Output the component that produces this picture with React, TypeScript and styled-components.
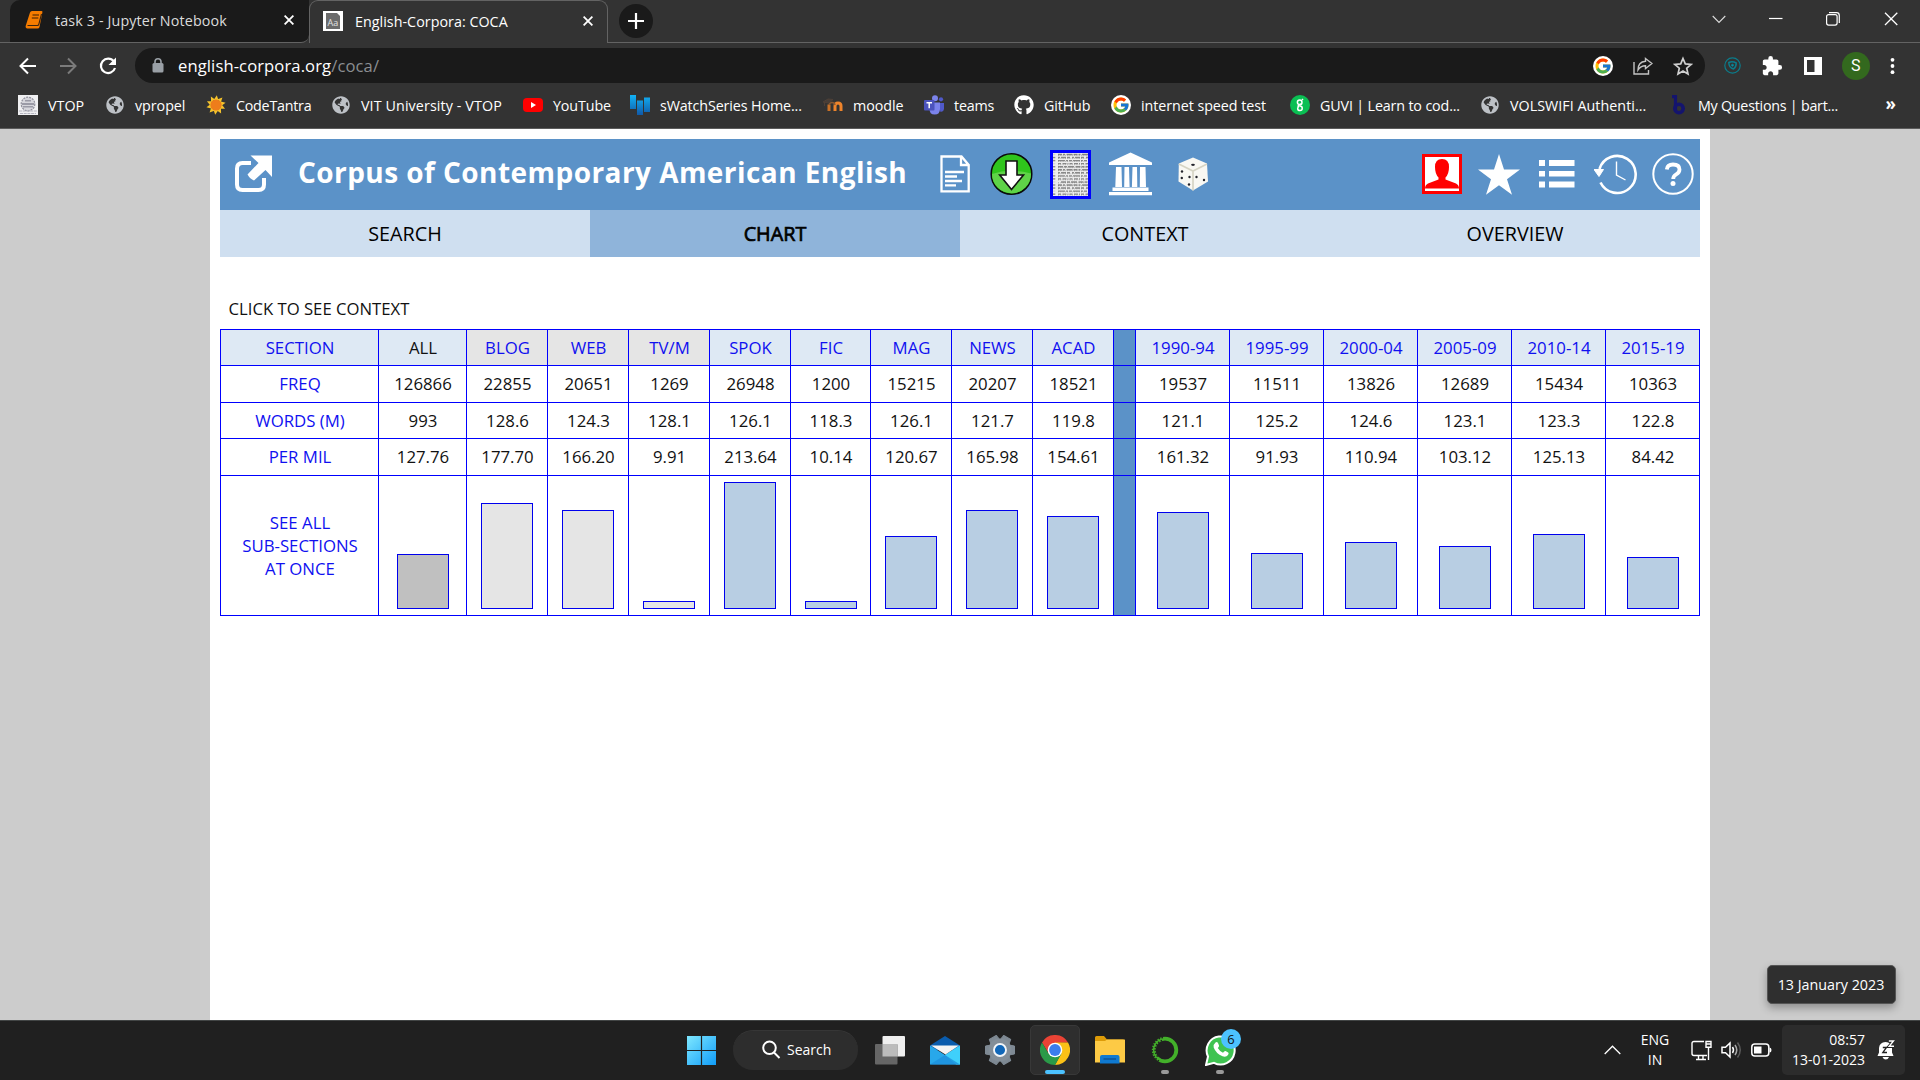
import React from "react";
import styled, { createGlobalStyle, css } from "styled-components";
import { FaGithub, FaGlobeAmericas } from "react-icons/fa";
import { FcGoogle } from "react-icons/fc";
import { MdExtension } from "react-icons/md";

const Global = createGlobalStyle`
  *, *::before, *::after { box-sizing: border-box; }
  body { margin: 0; background: #ccc; overflow: hidden; font-family: "Open Sans", "Noto Sans", sans-serif; }
  svg { display: block; flex: none; }
`;

const Desktop = styled.div`
  width: 1920px;
  height: 1080px;
  display: flex;
  flex-direction: column;
`;

/* ---------- Browser chrome ---------- */

const Browser = styled.header`
  height: 129px;
  flex: none;
  background: #333;
  color: #fff;
  border-bottom: 1px solid #5c5c5c;
`;

const TabStrip = styled.div`
  height: 43px;
  display: flex;
  align-items: stretch;
`;

const StripLine = styled.div<{ $w?: number }>`
  ${(p) => (p.$w ? `width: ${p.$w}px;` : "flex: 1;")}
  border-bottom: 1px solid #636363;
  display: flex;
  align-items: flex-start;
`;

const Tab = styled.div<{ $active?: boolean; $w: number }>`
  width: ${(p) => p.$w}px;
  display: flex;
  align-items: center;
  padding: 0 ${(p) => (p.$active ? 14 : 15)}px 2px ${(p) => (p.$active ? 13 : 15)}px;
  font-size: 14.3px;
  ${(p) =>
    p.$active
      ? css`
          border: 1px solid #636363;
          border-bottom: none;
          border-radius: 9px 9px 0 0;
          color: #fff;
        `
      : css`
          background: #1a1a1a;
          border-bottom: 1px solid #636363;
          border-radius: 10px 0 8px 0;
          color: #dcdcdc;
        `}
`;

const TabTitle = styled.span<{ $ls?: number }>`
  flex: 1;
  margin-left: 12px;
  letter-spacing: ${(p) => p.$ls ?? 0}px;
  white-space: nowrap;
`;

const NewTab = styled.div`
  width: 34px;
  height: 34px;
  margin: 4px 0 0 11px;
  border-radius: 50%;
  background: #1a1a1a;
  display: grid;
  place-items: center;
`;

const WindowButtons = styled.div`
  margin: 0 17px 0 auto;
  height: 38px;
  display: flex;
  align-items: center;
  gap: 37px;
`;

const Toolbar = styled.div`
  height: 46px;
  display: flex;
  align-items: center;
  padding: 0 25px 1px 18px;
`;

const NavButtons = styled.div`
  width: 117px;
  display: flex;
  gap: 20px;
  align-items: center;
`;

const Omnibox = styled.div`
  width: 1570px;
  height: 35px;
  border-radius: 18px;
  background: #1a1a1a;
  display: flex;
  align-items: center;
  padding: 0 12px 0 17px;
`;

const Url = styled.span`
  margin-left: 14px;
  flex: 1;
  font-size: 16.6px;
  letter-spacing: 0.1px;
  i {
    font-style: normal;
    color: #8b8e92;
  }
`;

const OmniIcons = styled.div`
  display: flex;
  align-items: center;
  gap: 20px;
`;

const Extensions = styled.div`
  display: flex;
  align-items: center;
  margin-left: 19px;
  flex: 1;
  justify-content: space-between;
`;

const Avatar = styled.div`
  width: 28px;
  height: 28px;
  border-radius: 50%;
  background: #33691e;
  font: 16px Roboto, sans-serif;
  display: grid;
  place-items: center;
`;

const Bookmarks = styled.nav`
  height: 34px;
  display: flex;
  align-items: center;
  padding: 0 0 2px 18px;
`;

const Bookmark = styled.div<{ $w: number; $ls: number }>`
  width: ${(p) => p.$w}px;
  display: flex;
  align-items: center;
  gap: 10px;
  white-space: nowrap;
  font-size: 14.3px;
  letter-spacing: ${(p) => p.$ls}px;
`;

const IconBox = styled.span`
  width: 20px;
  height: 20px;
  flex: none;
  display: grid;
  place-items: center;
`;

const GoogleBadge = styled.span`
  width: 20px;
  height: 20px;
  flex: none;
  border-radius: 50%;
  background: #fff;
  display: grid;
  place-items: center;
`;

const More = styled.span`
  margin-left: auto;
  padding: 0 24px 3px 0;
  font-size: 17px;
  font-weight: 700;
`;

/* ---------- Page ---------- */

const Viewport = styled.main`
  flex: 1;
  background: #ccc;
  display: flex;
  justify-content: center;
`;

const Page = styled.div`
  width: 1500px;
  background: #fff;
  padding: 10px 10px 0;
`;

const Banner = styled.div`
  height: 71px;
  background: #5b92c8;
  display: flex;
  align-items: center;
  padding: 0 6px 1px 14px;
`;

const Title = styled.h1`
  margin: 0 32px 4px 25px;
  width: 610px;
  font-size: 28px;
  font-weight: 700;
  letter-spacing: 0.44px;
  line-height: 40px;
  white-space: nowrap;
  color: #fff;
`;

const CorpusTools = styled.div`
  display: grid;
  grid-template-columns: 50px 60px 59px 69px 30px;
  align-items: center;
`;

const AccountTools = styled.div`
  margin-left: auto;
  display: grid;
  grid-template-columns: 56px 61px 55px 58px 42px;
  align-items: center;
`;

const Clipping = styled.div`
  width: 41px;
  height: 49px;
  border: 3px solid #0000ff;
  background: #ededed;
`;

const Profile = styled.div`
  width: 40px;
  height: 40px;
  border: 3px solid #f00;
  background: #fff;
`;

const Steps = styled.div`
  display: grid;
  grid-template-columns: repeat(4, 1fr);
  height: 47px;
`;

const Step = styled.div<{ $on?: boolean }>`
  display: grid;
  place-items: center;
  font-size: 19.8px;
  color: #000;
  background: ${(p) => (p.$on ? "#8fb4da" : "#cfdff0")};
  ${(p) => p.$on && "-webkit-text-stroke: 0.7px #000;"}
`;

const Hint = styled.div`
  margin: 40px 0 8px 8.5px;
  height: 24px;
  line-height: 24px;
  font-size: 16.7px;
  color: #111;
`;

const Chart = styled.div`
  display: grid;
  grid-template-columns: 158px 88px repeat(4, 81px) 80px repeat(3, 81px) 22px repeat(6, 94px);
  grid-template-rows: 36px 37px 36px 37px 140px;
  border-top: 1px solid #0000ff;
  border-left: 1px solid #0000ff;
  width: 1480px;
  font-size: 16.8px;
`;

const Cell = styled.div<{ $bg?: string; $blue?: boolean; $up?: boolean }>`
  border-right: 1px solid #0000ff;
  border-bottom: 1px solid #0000ff;
  background: ${(p) => p.$bg ?? "#fff"};
  color: ${(p) => (p.$blue ? "#1010f0" : "#111")};
  display: flex;
  align-items: center;
  justify-content: center;
  text-align: center;
  line-height: 23px;
  padding: 0 0 ${(p) => (p.$up ? 1 : 0)}px 1px;
  white-space: pre-line;
`;

const BarCell = styled(Cell)`
  align-items: flex-end;
  padding: 0 0 6px;
`;

const Bar = styled.div<{ $fill: string }>`
  width: 52px;
  border: 1px solid #0000ee;
  background: ${(p) => p.$fill};
`;

/* ---------- Taskbar ---------- */

const Taskbar = styled.footer`
  height: 60px;
  flex: none;
  background: #202020;
  border-top: 1px solid #424545;
  color: #fff;
  display: flex;
  align-items: center;
  padding: 0 15px 1px 687px;
`;

const SearchPill = styled.div`
  width: 125px;
  height: 40px;
  margin: 0 7px 0 17px;
  border-radius: 20px;
  background: #2d2d2d;
  border-top: 1px solid #363636;
  display: flex;
  align-items: center;
  padding: 0 0 2px 29px;
  gap: 6px;
  font-size: 14px;
`;

const Slot = styled.div<{ $active?: boolean }>`
  position: relative;
  width: 50px;
  height: 50px;
  margin-right: 5px;
  border-radius: 5px;
  display: grid;
  place-items: center;
  ${(p) =>
    p.$active &&
    css`
      background: #2e2e2e;
      border: 1px solid #383838;
    `}
`;

const Running = styled.span<{ $active?: boolean }>`
  position: absolute;
  bottom: ${(p) => (p.$active ? 0 : 1)}px;
  left: 50%;
  transform: translateX(-50%);
  width: ${(p) => (p.$active ? 20 : 8)}px;
  height: 4px;
  border-radius: 2px;
  background: ${(p) => (p.$active ? "#4cc2ff" : "#9a9a9a")};
`;

const Count = styled.span`
  position: absolute;
  top: 4px;
  right: 4px;
  width: 20px;
  height: 20px;
  border-radius: 50%;
  background: #4cc2ff;
  color: #111;
  font-size: 13px;
  line-height: 20px;
  text-align: center;
`;

const Tray = styled.div`
  margin-left: auto;
  display: flex;
  align-items: center;
  font-size: 14px;
  line-height: 20px;
`;

const Language = styled.div`
  width: 40px;
  margin: 0 16px 0 14px;
  text-align: center;
`;

const Status = styled.div`
  display: flex;
  gap: 9px;
  align-items: center;
`;

const Clock = styled.div`
  width: 123px;
  height: 50px;
  margin-left: 10px;
  padding: 0 10px 0 0;
  border-radius: 5px;
  background: #2c2c2c;
  display: flex;
  align-items: center;
  justify-content: flex-end;
  gap: 12px;
  text-align: right;
`;

const ClockText = styled.div`
  padding-bottom: 1px;
`;

const Tooltip = styled.div`
  position: absolute;
  left: 1767px;
  top: 965px;
  width: 129px;
  height: 39px;
  border-radius: 5px;
  background: #2f2f2f;
  border: 1px solid #555;
  box-shadow: 0 4px 8px rgba(0, 0, 0, 0.3);
  color: #fff;
  font-size: 14.3px;
  display: grid;
  place-items: center;
  white-space: nowrap;
  padding-right: 1px;
`;

/* ---------- Icons ---------- */

const Close = () => (
  <svg width="10" height="10" viewBox="0 0 10 10" stroke="#fff" strokeWidth="1.8">
    <path d="M.6.6l8.8 8.8M9.4.6L.6 9.4" />
  </svg>
);

const Book = () => (
  <svg width="18" height="20" viewBox="0 0 18 20">
    <path d="M5 2.5Q5.5 1 7 1h9.5q1.2 0 .9 1.2L14.5 17q-.4 1.5-2 1.5h-10Q0 18 .8 15.5z" fill="#f57c00" />
    <path d="M7.5 5H14M6.8 8h6.5" stroke="#7a3d00" strokeWidth="1.3" />
    <path d="M2.5 15.5h9.8q1.2 0 1.5-1.2L16.5 4" stroke="#3a2410" strokeWidth="1.1" fill="none" />
  </svg>
);

const Favicon = () => (
  <svg width="20" height="20" viewBox="0 0 20 20">
    <path d="M0 0h20v20H0z" fill="#fff" />
    <path d="M3 2h11l3 3v13H3z" fill="#6b6b6b" />
    <text x="4.5" y="14.5" fontSize="9" fill="#e2e2e2" fontFamily="Open Sans">Aa</text>
  </svg>
);

const Vtop = () => (
  <svg width="20" height="20" viewBox="0 0 20 20">
    <path d="M0 0h20v20H0z" fill="#f0f0f2" />
    <circle cx="10" cy="9" r="6.8" fill="#d6d6dc" stroke="#8e8e9a" strokeWidth="1.2" strokeDasharray="2 1" />
    <path d="M4 8h12v2H4zM5 11h10v1.5H5zM7 5h6v1.5H7z" fill="#9a9aa6" />
    <path d="M1 16h18M2 18.5h16" stroke="#b5b5c0" strokeWidth="1.2" strokeDasharray="3 .7" />
  </svg>
);

const Sun = () => (
  <svg width="20" height="20" viewBox="-10 -10 20 20">
    {[0, 36, 72, 108, 144, 180, 216, 252, 288, 324].map((a) => (
      <path key={a} d="M-2.4-5L.8-9.8 2.400-5z" fill="#f5c32c" transform={`rotate(${a})`} />
    ))}
    <circle r="5.6" fill="#ee7d1b" />
  </svg>
);

const Globe = () => <FaGlobeAmericas size={18} color="#bdc1c6" />;

const YouTube = () => (
  <svg width="20" height="20" viewBox="0 0 20 20">
    <rect y="3" width="20" height="14" rx="4" fill="#f00" />
    <path d="M8 7l5 3-5 3z" fill="#fff" />
  </svg>
);

const Swatch = () => (
  <svg width="20" height="20" viewBox="0 0 20 20">
    <defs>
      <linearGradient id="sw" x2="0" y2="1">
        <stop stopColor="#12b2f5" />
        <stop offset="1" stopColor="#1059a8" />
      </linearGradient>
    </defs>
    <path d="M0 0h6v14H0zM7 5.5h6V20H7zM14 2.5h6V17h-6z" fill="url(#sw)" />
  </svg>
);

const Moodle = () => (
  <svg width="20" height="20" viewBox="0 0 20 20" fill="none">
    <path d="M12 16v-5q0-3 3-3t3 3v5" stroke="#ee842b" strokeWidth="3" />
    <path d="M6 16V9.500" stroke="#c87026" strokeWidth="3" />
    <path d="M6 10q.5-2.500 3-2.500T12 10" stroke="#8a5a32" strokeWidth="1.6" />
    <path d="M0 7l5-3 5 .5-4 3.500zM1.500 7v4" stroke="#4e4037" fill="#453d38" />
  </svg>
);

const Teams = () => (
  <svg width="20" height="20" viewBox="0 0 20 20">
    <circle cx="11" cy="3.300" r="3" fill="#7b83eb" />
    <circle cx="17" cy="4.300" r="2.100" fill="#5059c9" />
    <path d="M14 8h6v5.500q0 3-3.500 3.500z" fill="#5059c9" />
    <path d="M5.500 7.500H16V14q0 5.500-5.300 5.500T5.500 14z" fill="#7b83eb" />
    <rect y="5" width="10.500" height="10.500" rx="1" fill="#4b53bc" />
    <path d="M2.500 7.700H8M5.200 7.700v5.600" stroke="#fff" strokeWidth="1.500" />
  </svg>
);

const Google = () => (
  <GoogleBadge>
    <FcGoogle size={18} />
  </GoogleBadge>
);

const Guvi = () => (
  <svg width="20" height="20" viewBox="0 0 20 20" fill="none" stroke="#fff" strokeWidth="1.500">
    <circle cx="10" cy="10" r="10" fill="#0abf53" stroke="none" />
    <circle cx="9.700" cy="7.200" r="2.300" />
    <path d="M12 5l1-1M12 8.500c-1 1.500-4 1-4 2.700M10 11c3 0 3 4.500 0 4.500s-3-3.500-.5-4.500" />
  </svg>
);

const Bartleby = () => (
  <svg width="13" height="20" viewBox="0 0 13 20" fill="none" stroke="#14146e">
    <path d="M0 1.700h3.500V15" strokeWidth="3.200" />
    <circle cx="7" cy="13.500" r="4.200" strokeWidth="3.600" />
  </svg>
);

const Arrow = ({ flip, color }: { flip?: boolean; color: string }) => (
  <svg width="20" height="20" viewBox="0 0 20 20" fill="none" stroke={color} strokeWidth="2" transform={flip ? "scale(-1 1)" : undefined}>
    <path d="M18 10H3M10 2.500L2.500 10l7.500 7.500" />
  </svg>
);

const Reload = () => (
  <svg width="20" height="20" viewBox="0 0 20 20">
    <path d="M15.800 5.400A7.200 7.200 0 1 0 17 12" fill="none" stroke="#fff" strokeWidth="2.200" />
    <path d="M18 1.500V9h-7.500z" fill="#fff" />
  </svg>
);

const Lock = () => (
  <svg width="12" height="15" viewBox="0 0 12 15">
    <rect x=".5" y="5" width="11" height="9.500" rx="1.500" fill="#9aa0a6" />
    <path d="M3 6V3.800a3 3 0 0 1 6 0V6" fill="none" stroke="#9aa0a6" strokeWidth="1.600" />
  </svg>
);

const Share = () => (
  <svg width="20" height="18" viewBox="0 0 20 18" fill="none" stroke="#c4c4c4" strokeWidth="1.400">
    <path d="M1 5v12h14.500v-4M12.500 1.500l6.500 5-6.500 5V8.800q-5 0-7.500 4.200 0-8 7.500-8.700z" />
  </svg>
);

const StarOutline = () => (
  <svg width="20" height="20" viewBox="0 0 20 20">
    <path d="M10 2.500l2.300 5.400 5.800.5-4.400 3.800 1.300 5.700-5-3-5 3 1.300-5.700-4.400-3.800 5.800-.5z" fill="none" stroke="#d0d0d0" strokeWidth="1.700" />
  </svg>
);

const Target = () => (
  <svg width="17" height="17" viewBox="0 0 17 17" fill="none" stroke="#0b7d8c">
    <circle cx="8.500" cy="8.500" r="7.700" strokeWidth="1.200" />
    <path d="M4.800 5.500Q8.500 4 12.200 6q.3 3.500-2.700 6-4.500-1-4.700-6.500z" strokeWidth="1.500" />
    <circle cx="8.500" cy="8.200" r="1" fill="#0b9cab" />
  </svg>
);

const SidePanel = () => (
  <svg width="18" height="18" viewBox="0 0 18 18">
    <path d="M0 0h18v18H0zM3 3v12h7.500V3z" fill="#fff" fillRule="evenodd" />
  </svg>
);

const Dots = () => (
  <svg width="5" height="18" viewBox="0 0 5 18" fill="#fff">
    <circle cx="2.500" cy="2.800" r="1.900" />
    <circle cx="2.500" cy="9" r="1.900" />
    <circle cx="2.500" cy="15.200" r="1.900" />
  </svg>
);

const OpenOut = () => (
  <svg width="39" height="38" viewBox="0 0 39 38">
    <path d="M17 8H8.500Q3 8 3 13.500v16Q3 35 8.500 35h16q5.500 0 5.500-5.500V23" fill="none" stroke="#fff" strokeWidth="4" />
    <path d="M16.500.5H38V22l-6.500-7L20 25.500q-4-1.500-6.500-6L24.500 8z" fill="#fff" />
  </svg>
);

const Doc = () => (
  <svg width="30" height="38" viewBox="0 0 30 38" fill="none" stroke="#fff" strokeWidth="2.300">
    <path d="M1.500 1.500h20l7.200 8.500v26.300H1.500zM21 1.500V10h7.500" />
    <path d="M5 17h19M5 21.500h12M5 26h17M5 30.300h11" />
  </svg>
);

const Download = () => (
  <svg width="43" height="44" viewBox="0 0 43 44">
    <circle cx="21.500" cy="22" r="20.300" fill="#2fc51c" stroke="#0a0a0a" strokeWidth="1.500" />
    <path d="M2 22Q20 16 41 21.500A19.500 19.500 0 0 1 2 22z" fill="#5fd348" />
    <path d="M16 9h11v14h6.500L21.500 37.500 9.700 23H16z" fill="#fff" stroke="#111" strokeWidth="1.600" />
  </svg>
);

const dashes = ["4 1 2 1.5 6 1", "2 1 5 1 3 2", "7 1 2 1 3 1", "3 1.5 4 1 1 1", "5 1 3 1 6 1.5"];
const Print = () => (
  <svg width="35" height="43" viewBox="0 0 35 43" stroke="#4a4a4a">
    {Array.from({ length: 14 }, (_, i) => (
      <g key={i} strokeWidth="1.400">
        <path d={`M${i === 9 ? 8 : 5} ${1.5 + i * 3.05}H35`} strokeDasharray={dashes[i % 5]} opacity=".6" />
        <path d={`M5 ${2.3 + i * 3.05}H35`} strokeDasharray="1 1.300" opacity=".3" />
        <path d={`M0 ${1.5 + i * 3.05}H2.300`} opacity={i % 3 ? 0.6 : 0.15} />
      </g>
    ))}
  </svg>
);

const Bank = () => (
  <svg width="43" height="44" viewBox="0 0 43 44" fill="#fff">
    <path d="M21.500 .5L43 10.500v2.500H0v-2.500zM7 15h5.500l.5 20H6.300zM15.500 15H20l.6 20h-5.400zM23.500 15H28l.3 20h-5.400zM31 15h5.500l.5 20h-6.200zM3.500 35.500h36V39h-36zM0 40h43v3.300H0z" />
  </svg>
);

const Dice = () => (
  <svg width="30" height="34" viewBox="0 0 30 34">
    <path d="M15 .5L29 6.500l1 18L15 33.500.5 24.500.8 6.500z" fill="#f9f8f3" />
    <path d="M.8 7L15 14l14-7M15 14v19.500" fill="none" stroke="#d6d4c4" strokeWidth="1.700" />
    <g fill="#24242c">
      <ellipse cx="15" cy="7.800" rx="1.900" ry="1.100" />
      <circle cx="4" cy="14.500" r="1.200" />
      <circle cx="11.500" cy="20" r="1.200" />
      <circle cx="3.800" cy="21" r="1.200" />
      <circle cx="11" cy="27.500" r="1.200" />
      <circle cx="18.500" cy="20" r="1.200" />
      <circle cx="26" cy="23" r="1.200" />
    </g>
  </svg>
);

const Person = () => (
  <svg width="34" height="34" viewBox="0 0 34 34" fill="#f00">
    <path d="M17 2q7 0 7 8 0 7-3.500 10.500v2L31 26.500q3 1.500 3 5H0q0-3.500 3-5l10.500-4v-2Q10 17 10 10q0-8 7-8z" />
  </svg>
);

const Star = () => (
  <svg width="42" height="41" viewBox="0 0 42 41" fill="#fff">
    <path d="M21 0l5 15.500h16L29 25.200l5 15.500-13-9.500-13 9.500 5-15.500L0 15.500h16z" />
  </svg>
);

const List = () => (
  <svg width="36" height="28" viewBox="0 0 36 28" fill="#fff">
    <path d="M0 0h6v6H0zM10 0h25.500v6H10zM0 11h6v5.500H0zM10 11h25.500v5.500H10zM0 21.500h6v6H0zM10 21.500h25.500v6H10z" />
  </svg>
);

const History = () => (
  <svg width="43" height="42" viewBox="0 0 43 42" fill="none" stroke="#fff">
    <path d="M5.500 16A18.500 18.500 0 1 1 6.500 29.500" strokeWidth="2.600" />
    <path d="M0 16.500h9.500L5 23.500z" fill="#fff" strokeWidth="1" />
    <path d="M22.500 8.500V22l9 5" strokeWidth="1.400" />
  </svg>
);

const Help = () => (
  <svg width="42" height="42" viewBox="0 0 42 42" fill="none" stroke="#fff">
    <circle cx="21" cy="21" r="19.700" strokeWidth="2" />
    <path d="M14.800 16.500q.5-5 6.200-5 6.500 0 6.500 5 0 3-3.300 4.800-3 1.700-3 4.700" strokeWidth="3.800" />
    <circle cx="21" cy="30.500" r="2.500" fill="#fff" stroke="none" />
  </svg>
);

const Windows = () => (
  <svg width="29" height="29" viewBox="0 0 29 29">
    <defs>
      <linearGradient id="win" x2="1" y2="1">
        <stop stopColor="#7fe8ff" />
        <stop offset="1" stopColor="#109cf8" />
      </linearGradient>
    </defs>
    <path d="M0 0h13.900v13.900H0zM15.100 0H29v13.900H15.100zM0 15.100h13.900V29H0zM15.100 15.100H29V29H15.100z" fill="url(#win)" />
  </svg>
);

const Magnifier = () => (
  <svg width="19" height="19" viewBox="0 0 19 19" fill="none" stroke="#fff" strokeWidth="2">
    <circle cx="7.500" cy="7.800" r="6.300" />
    <path d="M12 12.500l5.500 5.500" />
  </svg>
);

const TaskView = () => (
  <svg width="30" height="29" viewBox="0 0 30 29">
    <rect x="7.500" width="22.500" height="20.500" rx="1" fill="#efefef" />
    <rect y="8" width="22.500" height="20.500" rx="1" fill="#666" />
    <path d="M7.500 8h15v12.500h-15z" fill="#bcbcbc" />
  </svg>
);

const Mail = () => (
  <svg width="30" height="29" viewBox="0 0 30 29">
    <path d="M0 9.500L15 0l15 9.500V14H0z" fill="#0a5cad" />
    <path d="M0 9.500L15 19 30 9.500V28.500H0z" fill="#28a8ea" />
    <path d="M30 9.500L15 19l11 9.500h4z" fill="#3fd0fb" />
    <path d="M0 28.500L15 19l15 9.500z" fill="#1c8fdc" opacity=".75" />
    <path d="M1 9.500h28L15.500 18.500z" fill="#f4f4f4" />
  </svg>
);

const Gear = () => (
  <svg width="30" height="30" viewBox="-15 -15 30 30">
    {[30, 90, 150, 210, 270, 330].map((a) => (
      <path key={a} d="M-5-9l1-5.500h8L5-9z" fill="#7e8993" stroke="#7e8993" strokeLinejoin="round" transform={`rotate(${a})`} />
    ))}
    <circle r="11.500" fill="#838e98" />
    <circle r="6" fill="#1167b8" stroke="#f2f5f8" strokeWidth="1.900" />
  </svg>
);

const Chrome = () => (
  <svg width="30" height="30" viewBox="-15 -15 30 30">
    <path d="M-13-7.500A15 15 0 0 1 13-7.500L0-7-6.300 3.600z" fill="#ea4335" />
    <path d="M13-7.500A15 15 0 0 1 0 15L6.300 3.600 0-7.500z" fill="#fbc116" />
    <path d="M0 15A15 15 0 0 1-13-7.500L-6.500 3.600 6.500 3.600z" fill="#2a9a48" />
    <circle r="7.300" fill="#fff" />
    <circle r="5.900" fill="#3b7ded" />
  </svg>
);

const Folder = () => (
  <svg width="30" height="28" viewBox="0 0 30 28">
    <path d="M0 1.500Q0 0 1.500 0H9l3 3.500h16q1.500 0 1.500 1.500v6H0z" fill="#dd9b08" />
    <path d="M0 5h10l2-1.500h17.500q.5 0 .5.500v22.500H0z" fill="#fdca45" />
    <path d="M5 27.500V21q0-2 2-2h15.500q2 0 2 2v6.500z" fill="#0f79d0" />
    <path d="M8.500 23H21" stroke="#0a4c90" strokeWidth="1.300" />
  </svg>
);

const Anaconda = () => (
  <svg width="28" height="28" viewBox="0 0 28 28" fill="none">
    <circle cx="14" cy="14" r="11.300" stroke="#43b02a" strokeWidth="3.800" />
    <path d="M12 1.500A12.500 12.500 0 0 0 8 25" stroke="#202020" strokeWidth="1.400" strokeDasharray="1.600 1.400" />
    <path d="M11 4.500A10 10 0 0 0 7.500 21.500" stroke="#202020" strokeWidth="1.400" strokeDasharray="1.500 1.500" />
  </svg>
);

const WhatsApp = () => (
  <svg width="31" height="32" viewBox="0 0 31 32">
    <path d="M1 31l2-8.500A14 14 0 1 1 9 28.800z" fill="#3fc351" stroke="#fff" strokeWidth="2" />
    <path d="M10.500 8.500q1.500-1 2.500.5l1 2.500q.3 1-1.200 2.500 2 3.500 5.200 4.700 1.500-2 2.500-1.700l2.700 1.500q1 .7-.2 2.500-2 2.500-5.500 1.200-6.500-2.500-8.800-8.700-.7-3 1.800-5z" fill="#fff" />
  </svg>
);

const ChevronUp = () => (
  <svg width="17" height="10" viewBox="0 0 17 10" fill="none" stroke="#fff" strokeWidth="1.300">
    <path d="M.7 9L8.500 1.200 16.300 9" />
  </svg>
);

const Network = () => (
  <svg width="21" height="21" viewBox="0 0 21 21" fill="none" stroke="#fff" strokeWidth="1.400">
    <path d="M13 1.500H3Q1 1.500 1 3.500v10q0 2 2 2h13M5 19.500h10M7.500 16v3M12 16v3M15 1.500h5v5.700h-5zM17.500 7.500V20M15 4h5" />
  </svg>
);

const Speaker = () => (
  <svg width="21" height="18" viewBox="0 0 21 18" fill="none" stroke="#fff" strokeWidth="1.500">
    <path d="M1 6.300h3.500L9 2v14l-4.500-4.300H1zM11.500 6q2 3 0 6" />
    <path d="M14 4q3.500 5 0 10" stroke="#aaa" />
    <path d="M16.500 1.500q5.500 7.500 0 15" stroke="#5a5a5a" />
  </svg>
);

const Battery = () => (
  <svg width="21" height="14" viewBox="0 0 21 14">
    <rect x=".8" y="1" width="17" height="12" rx="3" fill="none" stroke="#fff" strokeWidth="1.500" />
    <path d="M3 3.500h7.500v7H3zM18.500 4.500q2 0 2 2.500t-2 2.500z" fill="#fff" />
  </svg>
);

const Bell = () => (
  <svg width="18" height="20" viewBox="0 0 18 20">
    <path d="M.5 16L2 12.500V8Q2.500 2.500 8.500 2 15 2.500 15 8v4.500l1.500 3.500zM5.500 17H12q-1 2.500-3.200 2.500T5.500 17z" fill="#fff" />
    <path d="M5.800 7.500h3.700l-3.700 5H10" fill="none" stroke="#222" strokeWidth="1.300" />
    <path d="M11 .8h5.500L11.700 6.500H17" fill="none" stroke="#222" strokeWidth="2.800" />
    <path d="M11.800 1H16.500L12.200 6.300H17" fill="none" stroke="#fff" strokeWidth="1.400" />
  </svg>
);

/* ---------- Data ---------- */

const bookmarks: { name: string; w: number; ls: number; icon: React.ReactNode }[] = [
  { name: "VTOP", w: 87, ls: 0, icon: <Vtop /> },
  { name: "vpropel", w: 101, ls: -0.05, icon: <Globe /> },
  { name: "CodeTantra", w: 125, ls: -0.25, icon: <Sun /> },
  { name: "VIT University - VTOP", w: 192, ls: 0.1, icon: <Globe /> },
  { name: "YouTube", w: 107, ls: -0.12, icon: <YouTube /> },
  { name: "sWatchSeries Home...", w: 193, ls: -0.12, icon: <Swatch /> },
  { name: "moodle", w: 101, ls: -0.05, icon: <Moodle /> },
  { name: "teams", w: 90, ls: -0.2, icon: <Teams /> },
  { name: "GitHub", w: 97, ls: -0.15, icon: <FaGithub size={20} color="#fff" /> },
  { name: "internet speed test", w: 179, ls: -0.06, icon: <Google /> },
  { name: "GUVI | Learn to cod...", w: 190, ls: -0.15, icon: <Guvi /> },
  { name: "VOLSWIFI Authenti...", w: 188, ls: 0.03, icon: <Globe /> },
  { name: "My Questions | bart...", w: 180, ls: -0.25, icon: <Bartleby /> },
];

const PALE = "#dee9f4";
const GREY = "#e5e5e5";
const BLUE = "#b8cee3";

type Column = { name: string; freq: string; words: string; mil: string; h: number; head: string; fill: string };
const col = (name: string, freq: string, words: string, mil: string, h: number, head = PALE, fill = BLUE): Column => ({
  name, freq, words, mil, h, head, fill,
});

const genres = [
  col("ALL", "126866", "993", "127.76", 55, PALE, "#c0c0c0"),
  col("BLOG", "22855", "128.6", "177.70", 106, GREY, GREY),
  col("WEB", "20651", "124.3", "166.20", 99, GREY, GREY),
  col("TV/M", "1269", "128.1", "9.91", 8, GREY, GREY),
  col("SPOK", "26948", "126.1", "213.64", 127),
  col("FIC", "1200", "118.3", "10.14", 8),
  col("MAG", "15215", "126.1", "120.67", 73),
  col("NEWS", "20207", "121.7", "165.98", 99),
  col("ACAD", "18521", "119.8", "154.61", 93),
];
const years = [
  col("1990-94", "19537", "121.1", "161.32", 97),
  col("1995-99", "11511", "125.2", "91.93", 56),
  col("2000-04", "13826", "124.6", "110.94", 67),
  col("2005-09", "12689", "123.1", "103.12", 63),
  col("2010-14", "15434", "123.3", "125.13", 75),
  col("2015-19", "10363", "122.8", "84.42", 52),
];

type RowProps = { label: string; head?: boolean; up?: boolean; render: (c: Column) => React.ReactNode };
const Row = ({ label, head, up, render }: RowProps) => (
  <>
    <Cell $blue $up={up} $bg={head ? PALE : undefined}>{label}</Cell>
    {genres.map(render)}
    <Cell $bg="#5b92c8" />
    {years.map(render)}
  </>
);

export default function App() {
  return (
    <Desktop>
      <Global />
      <Browser>
        <TabStrip>
          <StripLine $w={10} />
          <Tab $w={299}>
            <Book />
            <TabTitle $ls={0.14}>task 3 - Jupyter Notebook</TabTitle>
            <Close />
          </Tab>
          <Tab $active $w={299}>
            <Favicon />
            <TabTitle $ls={0.03}>English-Corpora: COCA</TabTitle>
            <Close />
          </Tab>
          <StripLine>
            <NewTab>
              <svg width="16" height="16" viewBox="0 0 16 16" stroke="#fff" strokeWidth="2.200">
                <path d="M8 0v16M0 8h16" />
              </svg>
            </NewTab>
            <WindowButtons>
              <svg width="14" height="9" viewBox="0 0 14 9" fill="none" stroke="#ddd" strokeWidth="1.100">
                <path d="M.7 1L7 7.500 13.300 1" />
              </svg>
              <svg width="20" height="14" viewBox="0 0 20 14" stroke="#fff" strokeWidth="1.200">
                <path d="M6 6.500h13.500" />
              </svg>
              <svg width="26" height="14" viewBox="0 0 26 14" fill="none" stroke="#fff" strokeWidth="1.200">
                <rect x="6.600" y="2.600" width="10.500" height="10.500" rx="2" />
                <path d="M9 .7h7.500q2.800 0 2.800 2.800V11" />
              </svg>
              <svg width="20" height="14" viewBox="0 0 20 14" stroke="#fff" strokeWidth="1.300">
                <path d="M2 .7l12.300 12.300M14.300.7L2 13" />
              </svg>
            </WindowButtons>
          </StripLine>
        </TabStrip>
        <Toolbar>
          <NavButtons>
            <Arrow color="#fff" />
            <Arrow color="#7b7b7b" flip />
            <Reload />
          </NavButtons>
          <Omnibox>
            <Lock />
            <Url>
              english-corpora.org<i>/coca/</i>
            </Url>
            <OmniIcons>
              <Google />
              <Share />
              <StarOutline />
            </OmniIcons>
          </Omnibox>
          <Extensions>
            <Target />
            <MdExtension size={22} color="#fff" />
            <SidePanel />
            <Avatar>S</Avatar>
            <Dots />
          </Extensions>
        </Toolbar>
        <Bookmarks>
          {bookmarks.map((b) => (
            <Bookmark key={b.name} $w={b.w} $ls={b.ls}>
              <IconBox>{b.icon}</IconBox>
              {b.name}
            </Bookmark>
          ))}
          <More>»</More>
        </Bookmarks>
      </Browser>

      <Viewport>
        <Page>
          <Banner>
            <OpenOut />
            <Title>Corpus of Contemporary American English</Title>
            <CorpusTools>
              <Doc />
              <Download />
              <Clipping>
                <Print />
              </Clipping>
              <Bank />
              <Dice />
            </CorpusTools>
            <AccountTools>
              <Profile>
                <Person />
              </Profile>
              <Star />
              <List />
              <History />
              <Help />
            </AccountTools>
          </Banner>
          <Steps>
            <Step>SEARCH</Step>
            <Step $on>CHART</Step>
            <Step>CONTEXT</Step>
            <Step>OVERVIEW</Step>
          </Steps>
          <Hint>CLICK TO SEE CONTEXT</Hint>
          <Chart>
            <Row label="SECTION" head render={(c) => <Cell key={c.name} $bg={c.head} $blue={c.name !== "ALL"}>{c.name}</Cell>} />
            <Row label="FREQ" up render={(c) => <Cell key={c.name} $up>{c.freq}</Cell>} />
            <Row label="WORDS (M)" render={(c) => <Cell key={c.name}>{c.words}</Cell>} />
            <Row label="PER MIL" up render={(c) => <Cell key={c.name} $up>{c.mil}</Cell>} />
            <Row
              label={"SEE ALL\nSUB-SECTIONS\nAT ONCE"}
              render={(c) => (
                <BarCell key={c.name}>
                  <Bar $fill={c.fill} style={{ height: c.h }} />
                </BarCell>
              )}
            />
          </Chart>
        </Page>
      </Viewport>

      <Tooltip>13 January 2023</Tooltip>

      <Taskbar>
        <Windows />
        <SearchPill>
          <Magnifier />
          Search
        </SearchPill>
        <Slot>
          <TaskView />
        </Slot>
        <Slot>
          <Mail />
        </Slot>
        <Slot>
          <Gear />
        </Slot>
        <Slot $active>
          <Chrome />
          <Running $active />
        </Slot>
        <Slot>
          <Folder />
        </Slot>
        <Slot>
          <Anaconda />
          <Running />
        </Slot>
        <Slot>
          <WhatsApp />
          <Count>6</Count>
          <Running />
        </Slot>
        <Tray>
          <ChevronUp />
          <Language>
            ENG
            <br />
            IN
          </Language>
          <Status>
            <Network />
            <Speaker />
            <Battery />
          </Status>
          <Clock>
            <ClockText>
              08:57
              <br />
              13-01-2023
            </ClockText>
            <Bell />
          </Clock>
        </Tray>
      </Taskbar>
    </Desktop>
  );
}
